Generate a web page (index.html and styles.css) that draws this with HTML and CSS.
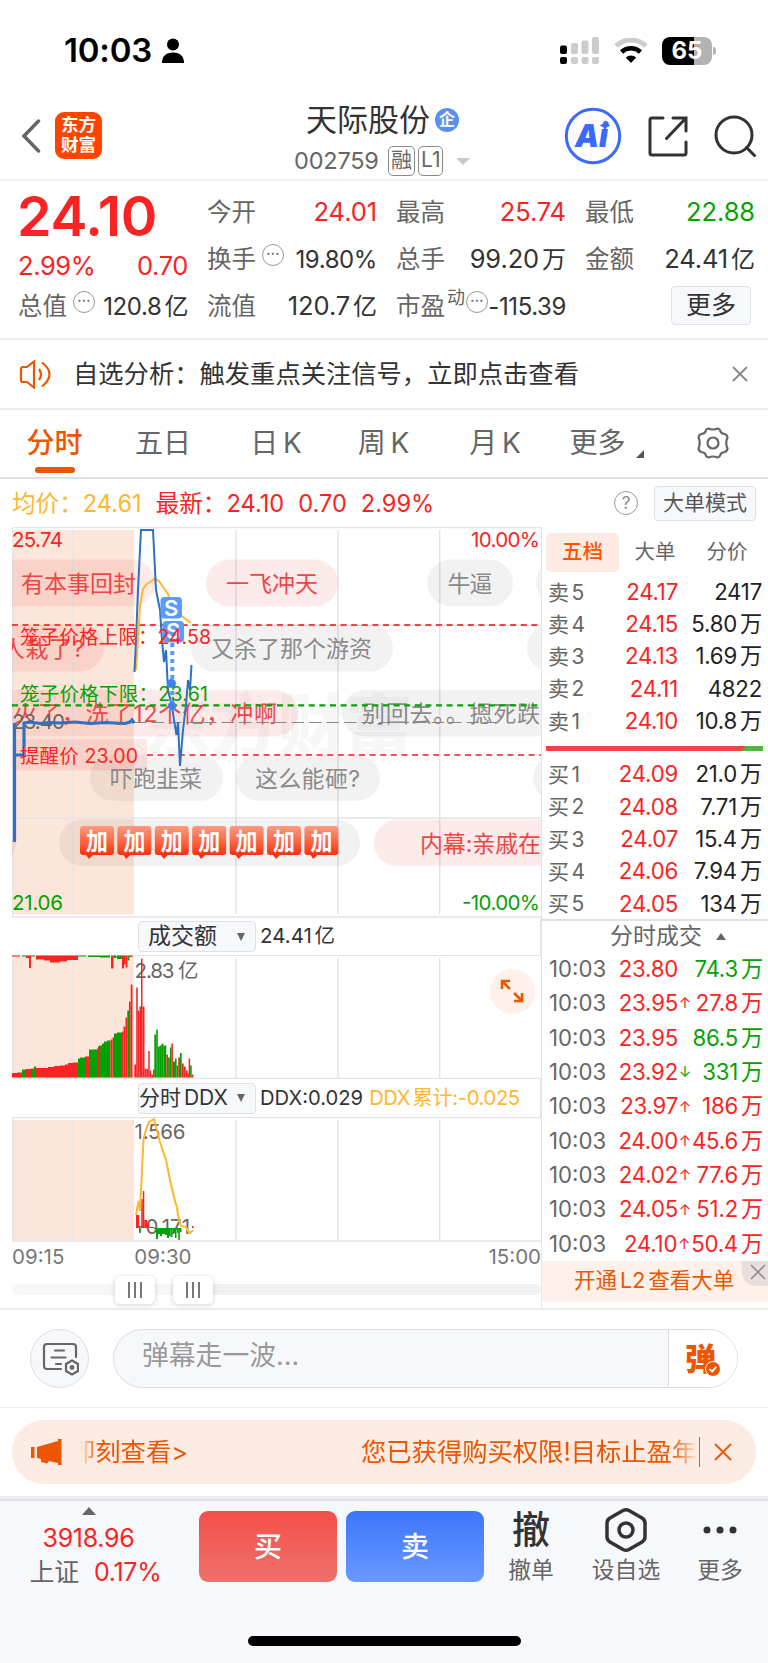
FILE: index.html
```html
<!DOCTYPE html>
<html lang="zh-CN">
<head>
    <meta charset="UTF-8">
    <meta name="viewport" content="width=device-width, initial-scale=1.0">
    <title>天际股份 002759</title>
    <link rel="stylesheet" href="styles.css">
</head>
<body>
    <div class="status">
        <span class="clock">10:03</span>
        <svg class="person" width="24" height="26" viewBox="0 0 24 26"><circle cx="12" cy="6.500" r="6"/><path d="M1 25c0-7 4-10.500 11-10.500S23 18 23 25z"/></svg>
        <div class="status-right">
            <svg width="40" height="28" viewBox="0 0 40 28">
                <g fill="#ccc"><rect x="11" y="6" width="7" height="11" rx="2"/><rect x="11" y="20" width="7" height="7" rx="2"/><rect x="21.500" y="3.500" width="7" height="13.500" rx="2"/><rect x="21.500" y="20" width="7" height="7" rx="2"/><rect x="32" y="0" width="7" height="17" rx="2"/><rect x="32" y="20" width="7" height="7" rx="2"/></g>
                <rect x="0" y="8.500" width="7" height="8.500" rx="2"/><rect x="0" y="20" width="7" height="7" rx="2"/>
            </svg>
            <svg width="34" height="26" viewBox="0 0 34 26" fill="none">
                <path d="M2 8a22 22 0 0 1 30 0" stroke="#ccc" stroke-width="5"/>
                <path d="M7.500 14a14 14 0 0 1 19 0" stroke="#000" stroke-width="4.500"/>
                <path d="M11.800 19.500a7.500 7.500 0 0 1 10.400 0L17 25z" fill="#000"/>
            </svg>
            <div class="battery"><span>65</span></div>
        </div>
    </div>

    <header class="header">
        <svg class="back" width="20" height="34" viewBox="0 0 20 34"><path d="M17.500 2L3 17l14.500 15"/></svg>
        <div class="logo"><span>东方</span><span>财富</span></div>
        <div class="title">
            <h1>天际股份<i>企</i></h1>
            <p><span class="code">002759</span><b>融</b><b>L1</b><em></em></p>
        </div>
        <div class="tools">
            <svg width="58" height="58" viewBox="0 0 58 58">
                <circle cx="29" cy="29" r="26.700" fill="none" stroke="#3b68ff" stroke-width="3"/>
                <text class="ai" x="11" y="40" textLength="33" lengthAdjust="spacingAndGlyphs">Ai</text>
                <path d="M41 13l1.700 3.800L46.500 18.500l-3.800 1.700L41 24l-1.700-3.800-3.800-1.700 3.800-1.700z" fill="#3b68ff"/>
            </svg>
            <svg width="40" height="41" viewBox="0 0 40 41" class="line"><path d="M15 2H4a2 2 0 0 0-2 2v33a2 2 0 0 0 2 2h32a2 2 0 0 0 2-2V26M25 2h13v13M37 3L18.500 22.500"/></svg>
            <svg width="42" height="42" viewBox="0 0 42 42" class="line"><circle cx="20" cy="20" r="18"/><path d="M32.500 32.500l8 8"/></svg>
        </div>
    </header>

    <section class="quote">
        <div class="col">
            <strong class="price">24.10</strong>
            <div class="cell change"><span>2.99%</span><span>0.70</span></div>
            <div class="cell small"><label>总值</label><i class="dots">•••</i><span>120.8<u>亿</u></span></div>
        </div>
        <div class="col">
            <div class="cell"><label>今开</label><span class="red">24.01</span></div>
            <div class="cell small"><label>换手</label><i class="dots">•••</i><span>19.80%</span></div>
            <div class="cell"><label>流值</label><span>120.7<u>亿</u></span></div>
        </div>
        <div class="col">
            <div class="cell"><label>最高</label><span class="red">25.74</span></div>
            <div class="cell"><label>总手</label><span>99.20<u>万</u></span></div>
            <div class="cell small pe"><label>市盈</label><sup>动</sup><i class="dots">•••</i><span>-115.39</span></div>
        </div>
        <div class="col">
            <div class="cell"><label>最低</label><span class="green">22.88</span></div>
            <div class="cell"><label>金额</label><span>24.41<u>亿</u></span></div>
            <div class="cell"><button class="btn">更多</button></div>
        </div>
    </section>

    <section class="notice">
        <svg width="34" height="29" viewBox="0 0 34 29"><path d="M2 9v11q0 2 2 2h4l7 5.500v-26L8 7H4q-2 0-2 2zM20 9q4 5.500 0 11M23 2.500q15 11.500 0 24"/></svg>
        <p>自选分析：触发重点关注信号，立即点击查看</p>
        <svg class="close" width="16" height="16" viewBox="0 0 16 16"><path d="M1 1l14 14M15 1L1 15"/></svg>
    </section>

    <nav class="tabs">
        <a class="active">分时</a>
        <a>五日</a>
        <a>日 K</a>
        <a>周 K</a>
        <a>月 K</a>
        <a class="more">更多</a>
        <svg width="34" height="32" viewBox="0 0 34 32"><path d="M12.500 1.500q4.500 2 9 0 2 0 3 3 .800 2 4 2.500 2.500.500 3 3.500-2.500 5.500 0 11-.500 3-3 3.500-3.200.500-4 2.500-1 3-3 3-4.500-2-9 0-2 0-3-3-.800-2-4-2.500-2.500-.500-3-3.500 2.500-5.500 0-11 .500-3 3-3.500 3.200-.500 4-2.500 1-3 3-3z"/><circle cx="17" cy="16" r="5.500"/></svg>
    </nav>

    <section class="summary">
        <span class="avg">均价：24.61</span>
        <span>最新：24.10</span>
        <span>0.70</span>
        <span>2.99%</span>
        <i>?</i>
        <button class="btn">大单模式</button>
    </section>

    <main class="board">
        <div class="charts">
            <svg class="chart" width="529" height="391" viewBox="12 527 529 391">
                <rect x="12" y="530" width="122" height="384.500" fill="#fce6d9"/>
                <g class="grid">
                    <path d="M12 527.500H541M12 917H541M12.500 527V917M73 530V914M236 530V914M338 530V914M439.700 530V914M134 625.500H541M12 818H541"/>
                </g>
                <text class="mark" x="143" y="751" textLength="270">东方财富</text>

                <g class="up">
                    <rect x="-40" y="559.500" width="195" height="47" rx="23.500"/><text x="21" y="592" textLength="115">有本事回封</text>
                    <rect x="206" y="559.500" width="132" height="47" rx="23.500"/><text x="226" y="592" textLength="92">一飞冲天</text>
                    <rect x="-60" y="624.500" width="164" height="47" rx="23.500"/><text x="2" y="657" textLength="82">人栽了?</text>
                    <rect x="-60" y="690" width="358" height="46.500" rx="23.500"/><text x="14" y="722" textLength="263">火了，洗了12个亿，冲啊</text>
                    <rect x="374" y="819.500" width="240" height="46.500" rx="23.500"/><text x="420" y="852" textLength="121">内幕:亲戚在</text>
                    <rect x="-60" y="819.500" width="76" height="46.500" rx="23.500"/>
                </g>
                <g class="flat">
                    <rect x="427" y="559.500" width="86" height="47" rx="23.500"/><text x="447.500" y="592" textLength="45">牛逼</text>
                    <rect x="536" y="559.500" width="60" height="47" rx="23.500"/>
                    <rect x="191" y="624.500" width="202" height="47" rx="23.500"/><text x="211" y="657" textLength="161">又杀了那个游资</text>
                    <rect x="527" y="624.500" width="60" height="47" rx="23.500"/>
                    <rect x="342" y="690" width="240" height="46.500" rx="23.500"/><text x="362" y="722" textLength="178">别回去。。摁死跌</text>
                    <rect x="90" y="754.500" width="133" height="46.500" rx="23.500"/><text x="110" y="787" textLength="92">吓跑韭菜</text>
                    <rect x="236" y="754.500" width="144" height="46.500" rx="23.500"/><text x="255" y="787" textLength="105">这么能砸?</text>
                    <rect x="533" y="754.500" width="60" height="46.500" rx="23.500"/>
                    <rect x="59" y="819.500" width="301" height="46.500" rx="23.500"/>
                </g>
                <defs>
                    <linearGradient id="jia" x2="0" y2="1"><stop offset="0" stop-color="#fc9a80"/><stop offset=".5" stop-color="#fb6a48"/><stop offset="1" stop-color="#fa3010"/></linearGradient>
                </defs>
                <g id="stickers"></g>

                <rect x="12" y="739" width="135" height="31.500" rx="3" fill="#f04848" fill-opacity=".13"/>
                <g fill="none">
                    <path d="M12 625H541" stroke="#ee4444" stroke-width="2" stroke-dasharray="6 4.600"/>
                    <path d="M12 705.300H541" stroke="#0a9f0a" stroke-width="2.200" stroke-dasharray="6 4.600"/>
                    <path d="M147 755H541" stroke="#ee5555" stroke-width="2" stroke-dasharray="6 4.600"/>
                    <path d="M134 722.500H500" stroke="#888" stroke-width="1.200" stroke-dasharray="12.500 5"/>
                </g>
                <g class="tips">
                    <text class="r" x="12" y="547" textLength="51">25.74</text>
                    <text class="r" x="471" y="547" textLength="69">10.00%</text>
                    <text class="g" x="12" y="909.500" textLength="51">21.06</text>
                    <text class="g" x="462" y="909.500" textLength="78">-10.00%</text>
                    <text class="k" x="12" y="729" textLength="53">23.40</text>
                </g>

                <path class="avgline" d="M136 670L138 640 140 605 143 589 147 584 150 582 155 579 159 581 163 587 168 594 170 601 174 605 178 613 184 618 191 623"/>
                <path class="priceline thick" d="M14.500 842V723M14.500 755H24V723L30 722 40 723.500 50 722.500 60 723 75 722 90 723.500 105 722.500 125 723.500 130 722 132 720 134 723"/>
                <path class="priceline" d="M134.500 672L136 640 138 590 141 530H153L155 570 156 590 160 610 162 640 164 662 166 650 168 690 172 706 174 720 176.500 735 178 722 180 766 183 730 186 705 188 680 190 690 191.500 665"/>
                <path d="M172.300 643V714" stroke="#5597fa" stroke-width="4" stroke-dasharray="4 4"/>
                <circle cx="171.500" cy="683.500" r="4.500" fill="#3d82f0"/><circle cx="172" cy="706" r="4" fill="#3d82f0"/>
                <rect x="160.500" y="597" width="21.500" height="21.500" rx="4" fill="#5a9cfa"/><text class="s" x="164" y="615.500">S</text>
                <rect x="162.500" y="621" width="21.500" height="21.500" rx="4" fill="#5a9cfa"/><text class="s" x="166" y="639">S</text>
                <g class="tips limit">
                    <text class="r" x="20" y="644" textLength="191">笼子价格上限：24.58</text>
                    <text class="g" x="20" y="701" textLength="188">笼子价格下限：23.61</text>
                    <text class="r" x="20" y="762.500" textLength="118">提醒价 23.00</text>
                </g>
            </svg>

            <div class="legend">
                <div class="select">成交额<em></em></div>
                <span>24.41 亿</span>
            </div>

            <div class="pane">
                <svg class="chart" width="529" height="124" viewBox="12 955 529 124">
                    <rect x="12" y="956" width="122" height="122" fill="#fce6d9"/>
                    <path class="grid" d="M12 955.300H541M12 1078.500H541M12.500 955V1078M73 958V1078M236 958V1078M338 958V1078M439.700 958V1078"/>
                    <text class="axis" x="134.500" y="977.500" textLength="64">2.83 亿</text>
                    <g id="volume"></g>
                </svg>
                <div class="expand">
                    <svg width="24" height="24" viewBox="0 0 24 24"><path d="M2 10V2h8M2 2l8 8M22 14v8h-8M22 22l-8-8"/></svg>
                </div>
            </div>

            <div class="legend low">
                <div class="select tight">分时 DDX<em></em></div>
                <span>DDX:0.029</span><span class="avg">DDX 累计:-0.025</span>
            </div>

            <svg class="chart" width="529" height="125" viewBox="12 1117 529 125">
                <rect x="12" y="1120" width="122" height="120" fill="#fce6d9"/>
                <path class="grid" d="M12 1117.500H541M12 1241H541M12.500 1117V1241M73 1120V1240M236 1120V1240M338 1120V1240M439.700 1120V1240"/>
                <text class="axis" x="134.500" y="1139" textLength="51">1.566</text>
                <text class="axis" x="136" y="1233.500" textLength="54">-0.171</text>
                <g id="ddx"></g>
                <path class="avgline" d="M136 1215L138.500 1201 140 1211 141.500 1180 143.500 1140 146 1129 149 1122 154 1119 156 1127 160 1142 166 1160 170 1180 174 1197 177 1208 179 1220 181 1226 186 1227 188 1231 190 1233 193 1230"/>
            </svg>

            <div class="times"><span>09:15</span><span class="open">09:30</span><span class="end">15:00</span></div>
            <div class="slider"><i></i><i></i></div>
        </div>

        <aside class="depth">
            <div class="depth-tabs"><a class="on">五档</a><a>大单</a><a>分价</a></div>
            <ul class="orders">
                <li><label>卖 5</label><b>24.17</b><span>2417</span></li>
                <li><label>卖 4</label><b>24.15</b><span>5.80 万</span></li>
                <li><label>卖 3</label><b>24.13</b><span>1.69 万</span></li>
                <li><label>卖 2</label><b>24.11</b><span>4822</span></li>
                <li><label>卖 1</label><b>24.10</b><span>10.8 万</span></li>
            </ul>
            <div class="ratio"></div>
            <ul class="orders">
                <li><label>买 1</label><b>24.09</b><span>21.0 万</span></li>
                <li><label>买 2</label><b>24.08</b><span>7.71 万</span></li>
                <li><label>买 3</label><b>24.07</b><span>15.4 万</span></li>
                <li><label>买 4</label><b>24.06</b><span>7.94 万</span></li>
                <li><label>买 5</label><b>24.05</b><span>134 万</span></li>
            </ul>
            <h2>分时成交<em></em></h2>
            <ul class="trades">
                <li><label>10:03</label><b>23.80</b><i></i><span class="green">74.3 万</span></li>
                <li><label>10:03</label><b>23.95</b><i>↑</i><span>27.8 万</span></li>
                <li><label>10:03</label><b>23.95</b><i></i><span class="green">86.5 万</span></li>
                <li><label>10:03</label><b>23.92</b><i class="green">↓</i><span class="green">331 万</span></li>
                <li><label>10:03</label><b>23.97</b><i>↑</i><span>186 万</span></li>
                <li><label>10:03</label><b>24.00</b><i>↑</i><span>45.6 万</span></li>
                <li><label>10:03</label><b>24.02</b><i>↑</i><span>77.6 万</span></li>
                <li><label>10:03</label><b>24.05</b><i>↑</i><span>51.2 万</span></li>
                <li><label>10:03</label><b>24.10</b><i>↑</i><span>50.4 万</span></li>
            </ul>
            <div class="promo">开通 L2 查看大单
                <div class="corner"><svg width="16" height="16" viewBox="0 0 16 16"><path d="M1 1l14 14M15 1L1 15"/></svg></div>
            </div>
        </aside>
    </main>

    <section class="danmu">
        <div class="round">
            <svg width="37" height="34" viewBox="0 0 37 34"><path d="M19 27H5q-3 0-3-3V5q0-3 3-3h26q3 0 3 3v10M13 8.500h9M9.500 15.500h14M14 22h5"/><path d="M30 18.500l6 3.500v7l-6 3.500-6-3.500v-7z"/><circle cx="30" cy="25.500" r="1.300"/></svg>
        </div>
        <div class="input">
            <span>弹幕走一波...</span>
            <div class="send">弹<svg width="16" height="16" viewBox="0 0 16 16"><circle cx="8" cy="8" r="7.500" fill="#ec5600" stroke="#fff"/><path d="M4.500 8l2.500 2.700 4.500-5" fill="none" stroke="#fff" stroke-width="1.800"/></svg></div>
        </div>
    </section>

    <section class="banner-wrap">
        <div class="banner">
            <svg width="31" height="27" viewBox="0 0 31 27" fill="#ec5600"><path d="M0 8h3.500v11H0zM6 8L27 2V0h3.500v26H27v-2l-9-2-2 2.500-6-1.500v-3L6 19z"/></svg>
            <div class="marquee"><span>即刻查看&gt;</span><span>您已获得购买权限!目标止盈年</span></div>
            <svg class="x" width="18" height="18" viewBox="0 0 18 18"><path d="M1 1l16 16M17 1L1 17"/></svg>
        </div>
    </section>

    <footer class="footer">
        <div class="index">
            <em></em>
            <span class="red">3918.96</span>
            <p>上证<span class="red">0.17%</span></p>
        </div>
        <button class="trade buy">买</button>
        <button class="trade sell">卖</button>
        <div class="action cancel"><b>撤</b><span>撤单</span></div>
        <div class="action fav">
            <svg width="44" height="46" viewBox="0 0 44 46"><path d="M19 3.500q3-1.500 6 0l13 7.500q3 2 3 5v14q0 3-3 5l-13 7.500q-3 1.500-6 0L6 35q-3-2-3-5V16q0-3 3-5z"/><circle cx="22" cy="23" r="7"/></svg>
            <span>设自选</span>
        </div>
        <div class="action etc">
            <svg width="34" height="46" viewBox="0 0 34 46"><g fill="#333" stroke="none"><circle cx="4" cy="23" r="3.500"/><circle cx="17" cy="23" r="3.500"/><circle cx="30" cy="23" r="3.500"/></g></svg>
            <span>更多</span>
        </div>
    </footer>
    <div class="home"><i></i></div>

    <script>

        const RED = '#fa2323';
        const GREEN = '#04a104';

        // [x, width, height, color], bars standing on the bottom line
        const volume = [
            [12,5,4.5,RED],[17,5,5,RED],[22,4,8,GREEN],[26,5,8.5,RED],[31,3,9,GREEN],[34,2,11,GREEN],
            [36,12,9.5,RED],[48,6,10.5,RED],[54,6,11.5,RED],[60,5,12,RED],[65,3,13,RED],[68,5,14.5,RED],[73,5,15,RED],
            [78,2,19,GREEN],[80,5,20,GREEN],[85,3,21,RED],[88,2,21,RED],[89,8,28,GREEN],[97,1,29,RED],[98,1.5,31,RED],
            [99,3,32,GREEN],[102,2,34,GREEN],[104,3,36,GREEN],[107,3.5,37,GREEN],[110.5,2,38,RED],[112.5,1.5,40,RED],
            [114,3,44,GREEN],[117,5,45,GREEN],[122,1.5,46,RED],[123.5,2,51,RED],[125.5,1.8,60,RED],[127.3,1.7,67,GREEN],
            [129,1.7,76,RED],[130.7,1.8,93,RED],
            [134.3,2,13,RED],[136.2,1.6,90,RED],[137.8,1.7,67,RED],[139.5,2,71,RED],[141,1.5,119,RED],[142.5,2,71,RED],
            [144.5,2,9,RED],[146.5,1.8,8.5,RED],[148.2,1.5,26.5,RED],[149.7,1.6,7,RED],[151.3,1.7,3,RED],[153,1.5,8,RED],
            [154.3,1.9,43,GREEN],[156.2,1.6,48,GREEN],[157.8,2,31,GREEN],[159.8,2,32,GREEN],[161.5,1.8,34,GREEN],[163.3,3,32,GREEN],
            [166.3,1.8,23,RED],[168.1,1.8,20,GREEN],[169.9,1.5,30,GREEN],[171.3,1.6,34,RED],[173,2,16,GREEN],[175,1.6,19,GREEN],
            [176.6,1.6,12,GREEN],[178.2,1.8,20,RED],[180,1.7,24.5,GREEN],[181.7,2,14,RED],[183.7,2,11,RED],[185.7,2,7,RED],
            [187.7,1.2,4,RED],[188.6,1.5,19,RED],[190.1,1.6,12,GREEN],[191.7,1.6,3,RED]
        ];
        // unmatched auction orders, hanging from the top line
        const pending = [
            [12,8,1,RED],[22,4,1,GREEN],[26,3,2.5,RED],[29,2,12.5,RED],[31,4,1,GREEN],
            [36,8,4,RED],[44,6,5,RED],[50,10,7,RED],[60,7,6,RED],[67,11,4.5,RED],[78,8,1,GREEN],[88,12,1.5,GREEN],
            [100,10,2,GREEN],[111,2.5,13,RED],[113.5,3,2.5,GREEN],[117,5,3.5,GREEN],[122,2,13,RED],[124,1.5,9,RED],
            [125.5,2,12,RED],[127.5,2,5,GREEN],[129.5,3,1.5,RED]
        ];
        const ddxUp = [[136,3.2,13,RED],[141.2,1.6,29,RED],[142.8,1.5,37,RED],[144.3,3,8,RED],[147.3,2,5,RED],[149.3,5,1,RED],[192,1.5,2,RED]];
        const ddxDown = [[139,1.8,5,GREEN],[154,27,1,GREEN],[156,2,11,GREEN],[158,2,6,GREEN],[160,2,8,GREEN],[162,3,6,GREEN],[165,2,7,GREEN],
            [167,2,10,GREEN],[169,1.5,8,GREEN],[170.5,2,9,GREEN],[172.5,2.5,5,GREEN],[175,1.5,10,GREEN],[177,1.5,5,GREEN],[178.3,1.6,12,GREEN],[180,1.5,4,GREEN]];

        const drawBars = (id, bars, base, down)=>{
            document.getElementById(id).innerHTML += bars.map(([x, w, h, c])=>
                `<rect x="${x}" y="${down ? base : base - h}" width="${w}" height="${h}" fill="${c}"/>`
            ).join('');
        }

        drawBars('volume', volume, 1077.5, false);
        drawBars('volume', pending, 955.5, true);
        drawBars('ddx', ddxUp, 1228, false);
        drawBars('ddx', ddxDown, 1228, true);

        const stickers = document.getElementById('stickers');
        for(let i = 0; i < 7; i++){
            const x = 80 + i * 37.4;
            stickers.innerHTML += `<rect x="${x}" y="826" width="34" height="29" rx="3" fill="url(#jia)"/>
                <path d="M${x + 6} 855h7l-4 4z" fill="#fa3010"/>
                <text class="jia" x="${x + 6}" y="849.5" textLength="22" lengthAdjust="spacingAndGlyphs">加</text>`;
        }
    </script>
</body>
</html>
```

FILE: styles.css
```css
* {
    margin: 0;
    padding: 0;
    box-sizing: border-box;
}

body {
    width: 768px;
    background-color: #fff;
    color: #333;
    font-family: Inter, "Noto Sans CJK SC", sans-serif;
    font-weight: 400;
    line-height: 1.2;
    white-space: nowrap;
    overflow-x: hidden;
}

ul {
    list-style: none;
}

i, em {
    font-style: normal;
}

u {
    margin-left: 3px;
    text-decoration: none;
}

button {
    font-family: inherit;
}

svg {
    display: block;
    flex-shrink: 0;
}

.red {
    color: #fa2323 !important;
}

.green {
    color: #04a104 !important;
}

.btn {
    border: 1px solid #dfe1e6;
    border-radius: 4px;
    background-color: #f7f8fb;
    color: #333;
}

/* status bar */
.status {
    display: flex;
    align-items: center;
    height: 100px;
    padding: 2px 56px 0 64px;
    color: #000;
}

.clock {
    font-size: 33px;
    font-weight: 600;
    width: 97px;
    letter-spacing: -0.2px;
}

.status-right {
    display: flex;
    align-items: center;
    gap: 14px;
    margin-left: auto;
}

.battery {
    position: relative;
    width: 50px;
    height: 28px;
    border-radius: 8px;
    background: linear-gradient(90deg, #000 65%, #b3b3b3 65%);
    color: #fff;
    text-align: center;
    font-size: 24px;
    line-height: 28px;
    font-weight: 700;
}

.battery::after {
    content: "";
    position: absolute;
    right: -4px;
    top: 10px;
    width: 3px;
    height: 8px;
    border-radius: 0 3px 3px 0;
    background-color: #b3b3b3;
}

/* header */
.header {
    display: grid;
    grid-template-columns: 34px 48px 1fr 192px;
    height: 81px;
    padding: 0 12px 0 21px;
    border-bottom: 2px solid #f2f2f4;
}

.back {
    margin-top: 19px;
    fill: none;
    stroke: #666;
    stroke-width: 3.500;
    stroke-linecap: round;
}

.logo {
    display: flex;
    flex-direction: column;
    justify-content: center;
    width: 47px;
    height: 47px;
    margin-top: 12px;
    padding-bottom: 2px;
    border-radius: 9px;
    background-color: #ff4400;
    color: #fff;
    font-size: 17.5px;
    line-height: 19.5px;
    font-weight: 700;
    text-align: center;
}

.title {
    padding-left: 177px;
}

.title h1 {
    display: flex;
    align-items: center;
    gap: 5px;
    height: 40px;
    padding-left: 26px;
    font-size: 31px;
    font-weight: 400;
}

.title h1 i {
    width: 24px;
    height: 24px;
    border-radius: 50%;
    background-color: #5c90ee;
    color: #fff;
    font-size: 16px;
    line-height: 22px;
    font-weight: 700;
    text-align: center;
}

.title p {
    display: flex;
    align-items: center;
    gap: 3px;
    height: 42px;
    margin-left: 14px;
    color: #666;
    font-size: 23.5px;
}

.title .code {
    width: 91px;
    letter-spacing: -0.2px;
}

.title b {
    height: 30px;
    padding: 0 2px;
    border: 1.5px solid #888;
    border-radius: 5px;
    font-size: 21px;
    font-weight: 400;
    line-height: 25px;
}

.title em {
    margin-left: 10px;
    border: 7px solid transparent;
    border-top: 7px solid #c8c8c8;
    border-bottom: 0;
}

.tools {
    display: flex;
    align-items: center;
    justify-content: space-between;
    height: 72px;
}

.tools .line {
    fill: none;
    stroke: #333;
    stroke-width: 3;
    stroke-linecap: round;
}

.ai {
    fill: #3b68ff;
    font-size: 32px;
    font-weight: 900;
    font-style: italic;
}

/* quote */
.quote {
    display: grid;
    grid-template-columns: repeat(4, 169px);
    gap: 20px;
    height: 159px;
    padding: 8px 0 0 19px;
    border-bottom: 2px solid #ececee;
}

.cell {
    display: flex;
    align-items: center;
    height: 47px;
    font-size: 25.5px;
    letter-spacing: -0.1px;
}

.cell label {
    margin-left: -1px;
    color: #666;
    font-size: 24.5px;
    letter-spacing: 0;
}

.cell > span {
    margin-left: auto;
}

.cell.small > span {
    font-size: 24px;
    letter-spacing: -0.4px;
    padding-top: 2px;
}

.cell u {
    font-size: 24px;
}

.price {
    display: block;
    height: 56px;
    margin-left: -2px;
    color: #fa2323;
    font-size: 55.5px;
    line-height: 54px;
    font-weight: 600;
    letter-spacing: -0.3px;
}

.cell.change {
    height: 38px;
    color: #fa2323;
    font-size: 25.5px;
    letter-spacing: -0.4px;
    padding-top: 4px;
}

.cell.change span:first-child {
    margin-left: -1px;
}

.dots {
    width: 22px;
    height: 22px;
    margin: -10px 0 0 6px;
    border: 1.5px solid #999;
    border-radius: 50%;
    color: #777;
    font-size: 7.5px;
    line-height: 18px;
    letter-spacing: 0.3px;
    text-align: center;
}

.cell sup {
    color: #666;
    font-size: 18px;
    line-height: 18px;
    margin: -18px 0 0 2px;
}

.pe .dots {
    margin-left: 1px;
}

.cell .btn {
    width: 80px;
    height: 39px;
    margin: -3px 4px 0 auto;
    font-size: 25px;
    line-height: 34px;
}

/* notice */
.notice {
    display: flex;
    align-items: center;
    height: 70px;
    padding: 0 20px 0 19px;
    border-bottom: 2px solid #ececee;
}

.notice svg {
    fill: none;
    stroke: #ec5600;
    stroke-width: 2.200;
}

.notice p {
    margin-left: 20px;
    font-size: 25.3px;
}

.notice .close {
    margin-left: auto;
    stroke: #888;
    stroke-width: 1.800;
}

/* period tabs */
.tabs {
    display: grid;
    grid-template-columns: 109px 108px 118px 97px 126px 79px 151px;
    height: 69px;
    border-bottom: 2px solid #dfe1e5;
    color: #666;
    font-size: 28px;
    line-height: 67px;
    text-align: center;
    word-spacing: -3px;
}

.tabs .active {
    position: relative;
    color: #ec5600;
    font-weight: 500;
}

.tabs .active::after {
    content: "";
    position: absolute;
    left: 35px;
    bottom: 4px;
    width: 40px;
    height: 6px;
    border-radius: 3px;
    background-color: #ec5600;
}

.tabs .more {
    position: relative;
}

.tabs .more::after {
    content: "";
    position: absolute;
    right: -7px;
    top: 40px;
    border-left: 8px solid transparent;
    border-bottom: 8px solid #555;
}

.tabs svg {
    margin: 17px auto 0;
    fill: none;
    stroke: #666;
    stroke-width: 2.200;
    stroke-linejoin: round;
}

/* price summary */
.summary {
    display: flex;
    align-items: center;
    height: 48px;
    padding: 3px 12px 0;
    color: #fa2323;
    font-size: 23.6px;
}

.summary span {
    margin-right: 14px;
}

.avg {
    color: #ffb72e;
}

.summary i {
    width: 24px;
    height: 24px;
    margin: -3px 0 0 auto;
    border: 1.5px solid #999;
    border-radius: 50%;
    color: #888;
    font-size: 17px;
    line-height: 22px;
    text-align: center;
}

.summary .btn {
    width: 102px;
    height: 35px;
    margin: -3px 0 0 16px;
    color: #555;
    font-size: 21px;
    line-height: 30px;
}

/* charts */
.board {
    display: flex;
    height: 783px;
    border-bottom: 2px solid #ececee;
}

.charts {
    width: 541px;
    padding-left: 12px;
}

.grid {
    fill: none;
    stroke: #e2e5ea;
    stroke-width: 1.500;
}

.mark {
    fill: #000;
    fill-opacity: .03;
    font-size: 68px;
    font-weight: 900;
}

.up rect {
    fill: #ee4444;
    fill-opacity: .11;
}

.up text {
    fill: #ee4646;
    font-size: 23px;
}

.flat rect {
    fill: #000;
    fill-opacity: .05;
}

.flat text {
    fill: #8a8a8a;
    font-size: 23px;
}

.jia {
    fill: #fff;
    font-size: 24px;
    font-weight: 700;
}

.tips {
    font-size: 20.5px;
}

.limit {
    font-size: 19.5px;
}

.tips .r {
    fill: #fa2323;
}

.tips .g {
    fill: #04a104;
}

.tips .k, .axis {
    fill: #666;
    font-size: 20.5px;
}

.avgline {
    fill: none;
    stroke: #ffb72e;
    stroke-width: 2;
}

.priceline {
    fill: none;
    stroke: #2d72c4;
    stroke-width: 2;
}

.priceline.thick {
    stroke-width: 3.200;
}

.s {
    fill: #fff;
    font-size: 22px;
    font-weight: 600;
}

.legend {
    display: flex;
    align-items: center;
    height: 37px;
    padding-left: 126px;
    border-right: 1px solid #e2e5ea;
    font-size: 20.5px;
    word-spacing: -3px;
}

.legend.low {
    height: 38px;
    font-size: 20.2px;
}

.select {
    display: flex;
    align-items: center;
    justify-content: space-between;
    width: 118px;
    height: 31px;
    margin-right: 4px;
    padding: 0 10px 0 9px;
    border: 1px solid #dfe1e6;
    border-radius: 4px;
    background-color: #f7f8fb;
    font-size: 23px;
}

.select.tight {
    padding-left: 0;
    font-size: 21px;
}

.select em {
    border: 4.5px solid transparent;
    border-top: 8px solid #666;
    border-bottom: 0;
}

.legend .avg {
    margin-left: 6px;
    letter-spacing: -0.35px;
}

.pane {
    position: relative;
}

.expand {
    position: absolute;
    right: 6px;
    top: 14px;
    width: 45px;
    height: 45px;
    padding: 10px;
    border-radius: 50%;
    background-color: #fdf1ea;
}

.expand path {
    fill: none;
    stroke: #ec5600;
    stroke-width: 2.500;
}

.times {
    display: flex;
    height: 34px;
    color: #777;
    font-size: 20.5px;
    line-height: 30px;
}

.times .open {
    margin-left: 70px;
}

.times .end {
    margin-left: auto;
}

.slider {
    display: flex;
    align-items: center;
    gap: 18px;
    height: 11px;
    margin-top: 8px;
    padding-left: 103px;
    border-radius: 6px;
    background: linear-gradient(90deg, #f7f7fa 30%, #f1f1f4 30%);
}

.slider i {
    width: 40px;
    height: 28px;
    padding: 6px 13px;
    border-radius: 5px;
    background: repeating-linear-gradient(90deg, #777 0 2px, transparent 2px 6px) content-box, #fff;
    box-shadow: 0 1px 5px rgba(0, 0, 0, .18);
}

/* order book */
.depth {
    width: 227px;
    border-left: 1px solid #e2e5ea;
    word-spacing: -3px;
}

.depth-tabs {
    display: flex;
    height: 45px;
    padding: 6px 0 0 4px;
    color: #666;
    font-size: 20.5px;
    line-height: 38px;
    text-align: center;
}

.depth-tabs a {
    width: 72px;
    height: 39px;
}

.depth-tabs .on {
    width: 73px;
    border-radius: 5px;
    background-color: #feece4;
    color: #ff5500;
    font-weight: 500;
}

.orders {
    padding: 4px 6px 0 6px;
}

.orders li, .trades li {
    display: flex;
    align-items: center;
    height: 32.3px;
    font-size: 22.2px;
    letter-spacing: -0.2px;
    color: #222;
}

.orders label, .trades label {
    width: 47px;
    color: #666;
}

.orders label {
    font-size: 21px;
}

.orders b, .trades b {
    width: 83px;
    color: #fa2323;
    font-weight: 400;
    text-align: right;
}

.orders span, .trades span {
    margin-left: auto;
}

.ratio {
    height: 5px;
    margin: 9px 5px 6px 4px;
    background: linear-gradient(125deg, #ee4646 90.5%, #4fb83c 90.5%);
}

.orders + .ratio + .orders {
    padding-top: 1px;
}

.depth h2 {
    display: flex;
    align-items: center;
    justify-content: center;
    gap: 14px;
    height: 33px;
    margin-top: -1px;
    padding-left: 26px;
    border-top: 2px solid #dfe1e5;
    color: #666;
    font-size: 23px;
    font-weight: 400;
}

.depth h2 em {
    border: 5px solid transparent;
    border-bottom: 7px solid #666;
    border-top: 0;
}

.trades {
    padding: 0 5px 0 7px;
}

.trades li {
    height: 34.35px;
}

.trades label {
    width: 60px;
    letter-spacing: 0;
}

.trades b {
    width: 69px;
}

.trades i {
    width: 14px;
    color: #fa2323;
    font-size: 15px;
    text-align: center;
}

.trades span {
    color: #fa2323;
}

.promo {
    position: relative;
    height: 41px;
    padding-left: 32px;
    background-color: #fdf1ea;
    color: #ec5600;
    font-size: 21.5px;
    line-height: 38px;
}

.corner {
    position: absolute;
    right: 0;
    top: 0;
    width: 26px;
    height: 25px;
    padding: 3px 0 0 8px;
    border-bottom-left-radius: 14px;
    background-color: #e8dedb;
}

.corner path {
    stroke: #888;
    stroke-width: 1.500;
}

/* danmu input */
.danmu {
    display: flex;
    gap: 24px;
    height: 98px;
    padding: 19px 30px 0;
    border-bottom: 1px solid #efeff1;
}

.round {
    display: flex;
    align-items: center;
    justify-content: center;
    width: 59px;
    height: 59px;
    border: 1px solid #dcdee4;
    border-radius: 50%;
    background-color: #f7f8fb;
}

.round svg {
    margin-left: 2px;
    fill: none;
    stroke: #666;
    stroke-width: 2.200;
    stroke-linecap: round;
}

.input {
    display: flex;
    width: 625px;
    height: 59px;
    border: 1px solid #dcdee4;
    border-radius: 30px;
    background-color: #f7f8fb;
    color: #999;
    font-size: 26.8px;
    line-height: 51px;
    overflow: hidden;
}

.input > span {
    width: 554px;
    padding-left: 28px;
}

.send {
    display: flex;
    flex: 1;
    align-items: center;
    padding-left: 16px;
    border-left: 1px solid #dcdee4;
    background-color: #fff;
    color: #ec5600;
    font-size: 31px;
    font-weight: 900;
}

.send svg {
    margin: 20px 0 0 -11px;
}

/* scrolling banner */
.banner-wrap {
    height: 91px;
    padding: 12px 12px 0;
    border-bottom: 3px solid #efeff1;
}

.banner {
    display: flex;
    align-items: center;
    height: 64px;
    padding: 0 24px 0 19px;
    border-radius: 32px;
    background-color: #feece4;
    color: #ec5600;
    font-size: 25.3px;
}

.marquee {
    display: flex;
    width: 619px;
    margin-left: 19px;
    border-right: 1.500px solid #ec5600;
    line-height: 30px;
    overflow: hidden;
}

.marquee span:first-child {
    width: 291px;
    margin-left: -11px;
    -webkit-mask-image: linear-gradient(90deg, transparent 10px, #000 28px);
    mask-image: linear-gradient(90deg, transparent 10px, #000 28px);
}

.marquee span:last-child {
    width: 338px;
    overflow: hidden;
    -webkit-mask-image: linear-gradient(90deg, #000 310px, transparent 338px);
    mask-image: linear-gradient(90deg, #000 310px, transparent 338px);
}

.banner .x {
    margin-left: auto;
    stroke: #ec5600;
    stroke-width: 1.800;
}

/* footer */
.footer {
    display: flex;
    height: 122px;
    border-top: 2px solid #dfe1e5;
    background-color: #f7f8fb;
}

.index {
    display: flex;
    flex-direction: column;
    align-items: center;
    width: 177px;
    margin-right: 22px;
    padding-top: 6px;
    font-size: 25px;
    letter-spacing: -0.3px;
}

.index em {
    border: 7px solid transparent;
    border-bottom: 8px solid #666;
    border-top: 0;
}

.index > span {
    line-height: 34px;
    margin-top: 6px;
}

.index p {
    display: flex;
    gap: 15px;
    padding-left: 14px;
    color: #666;
    line-height: 34px;
}

.trade {
    width: 138px;
    height: 71px;
    margin: 10px 9px 0 0;
    padding-bottom: 3px;
    border: 0;
    border-radius: 9px;
    color: #fff;
    font-size: 28px;
    font-weight: 500;
}

.buy {
    background: linear-gradient(#f4504a, #ee706a);
}

.sell {
    background: linear-gradient(#3b76fb, #6b98ff);
}

.action {
    display: flex;
    flex-direction: column;
    align-items: center;
    width: 94px;
    padding-top: 6px;
    color: #666;
    font-size: 22.8px;
}

.action span {
    line-height: 34px;
}

.action b {
    height: 46px;
    color: #333;
    font-size: 38px;
    line-height: 44px;
    font-weight: 500;
}

.action svg {
    fill: none;
    stroke: #333;
    stroke-width: 3.500;
}

.cancel {
    width: 76px;
}

.fav {
    width: 98px;
    margin-left: 8px;
}

.etc {
    width: 90px;
}

.home {
    height: 42px;
    padding-top: 15px;
    background-color: #f7f8fb;
}

.home i {
    display: block;
    width: 273px;
    height: 10px;
    margin: 0 auto;
    border-radius: 5px;
    background-color: #000;
}
```
